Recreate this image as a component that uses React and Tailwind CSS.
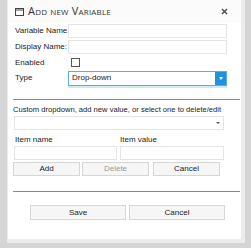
const Field = ({ label, children, className = '' }) => (
  <div className={`flex items-center h-[14px] ${className}`}>
    <span className="w-[53px] text-[8px] text-[#222] whitespace-nowrap">{label}</span>
    {children}
  </div>
);

const Btn = ({ children, className = '', disabled }) => (
  <div
    className={`h-[14px] flex items-center justify-center border border-[#d6d6d6] bg-[#f6f6f6] text-[8px] ${
      disabled ? 'text-[#999]' : 'text-[#222]'
    } ${className}`}
  >
    {children}
  </div>
);

export default function App() {
  return (
    <div
      className="w-[251px] h-[248px] bg-[#d5d5d5] overflow-hidden"
      style={{ fontFamily: '"Liberation Sans", Arial, sans-serif' }}
    >
      <div className="ml-[7px] w-[238px] h-[243px] bg-white border-r-[4px] border-b-[4px] border-l-[1px] border-[#ececec] flex flex-col">
        {/* Title */}
        <div className="h-[23px] flex items-center pl-[7px] pr-[13px] bg-[#fbfbfb]">
          <svg width="9" height="8" viewBox="0 0 9 8" className="mr-[4px]">
            <rect x="0.5" y="0.5" width="8" height="7" fill="none" stroke="#444" />
            <line x1="0.5" y1="2" x2="8.5" y2="2" stroke="#444" />
          </svg>
          <span
            className="text-[11px] text-[#333] tracking-[0.2px]"
            style={{ fontVariant: 'small-caps', fontFamily: '"Open Sans", sans-serif' }}
          >
            Add new Variable
          </span>
          <svg width="7" height="7" viewBox="0 0 7 7" className="ml-auto">
            <path d="M1 1L6 6M6 1L1 6" stroke="#555" strokeWidth="1.6" />
          </svg>
        </div>

        <div className="pl-[7px] flex flex-col gap-[2px] mt-[1px]">
          <Field label="Variable Name:">
            <div className="w-[159px] h-[14px] border border-[#e4e4e4] bg-white" />
          </Field>
          <Field label="Display Name:">
            <div className="w-[159px] h-[14px] border border-[#e4e4e4] bg-white" />
          </Field>
          <div className="flex items-center h-[9px] mt-[2px]">
            <span className="w-[56px] text-[8px] text-[#222]">Enabled</span>
            <div className="w-[9px] h-[9px] border border-[#555] bg-white" />
          </div>
          <Field label="Type" className="mt-[2px]">
            <div className="w-[159px] h-[15px] border border-[#5aaee5] bg-white flex items-center shadow-[0_2px_0_#cde8f8]">
              <span className="flex-1 pl-[3px] text-[8px] text-[#222]">Drop-down</span>
              <div className="w-[11px] h-full bg-[#1e93dc] flex items-center justify-center">
                <div className="w-0 h-0 border-l-[2.5px] border-r-[2.5px] border-t-[3px] border-l-transparent border-r-transparent border-t-white" />
              </div>
            </div>
          </Field>
        </div>

        <div className="ml-[5px] mr-[1px] mt-[14px] h-px bg-[#8a8a8a]" />

        <div className="pl-[5px] pr-[17px] mt-[5px]">
          <div className="text-[7.6px] text-[#222] leading-[10px] whitespace-nowrap">
            Custom dropdown, add new value, or select one to delete/edit
          </div>
          <div className="ml-[1px] mt-[1px] h-[14px] border border-[#e4e4e4] flex items-center justify-end pr-[3px]">
            <div className="w-0 h-0 border-l-[2px] border-r-[2px] border-t-[2.5px] border-l-transparent border-r-transparent border-t-[#555]" />
          </div>
          <div className="flex gap-[3px] ml-[1px] mt-[5px]">
            <div className="w-[103px]">
              <div className="text-[8px] text-[#222] leading-[10px] pl-[1px]">Item name</div>
              <div className="mt-[1px] h-[14px] border border-[#e4e4e4]" />
            </div>
            <div className="flex-1">
              <div className="text-[8px] text-[#222] leading-[10px]">Item value</div>
              <div className="mt-[1px] h-[14px] border border-[#e4e4e4]" />
            </div>
          </div>
          <div className="flex gap-[2px] mt-[2px]">
            <Btn className="w-[67px]">Add</Btn>
            <Btn className="w-[67px]" disabled>Delete</Btn>
            <Btn className="w-[67px] ml-[2px]">Cancel</Btn>
          </div>
        </div>

        <div className="ml-[5px] mr-[1px] mt-[15px] h-px bg-[#8a8a8a]" />

        <div className="flex gap-[3px] pl-[22px] mt-[13px]">
          <Btn className="w-[96px] h-[15px]">Save</Btn>
          <Btn className="w-[96px] h-[15px]">Cancel</Btn>
        </div>
      </div>
    </div>
  );
}
